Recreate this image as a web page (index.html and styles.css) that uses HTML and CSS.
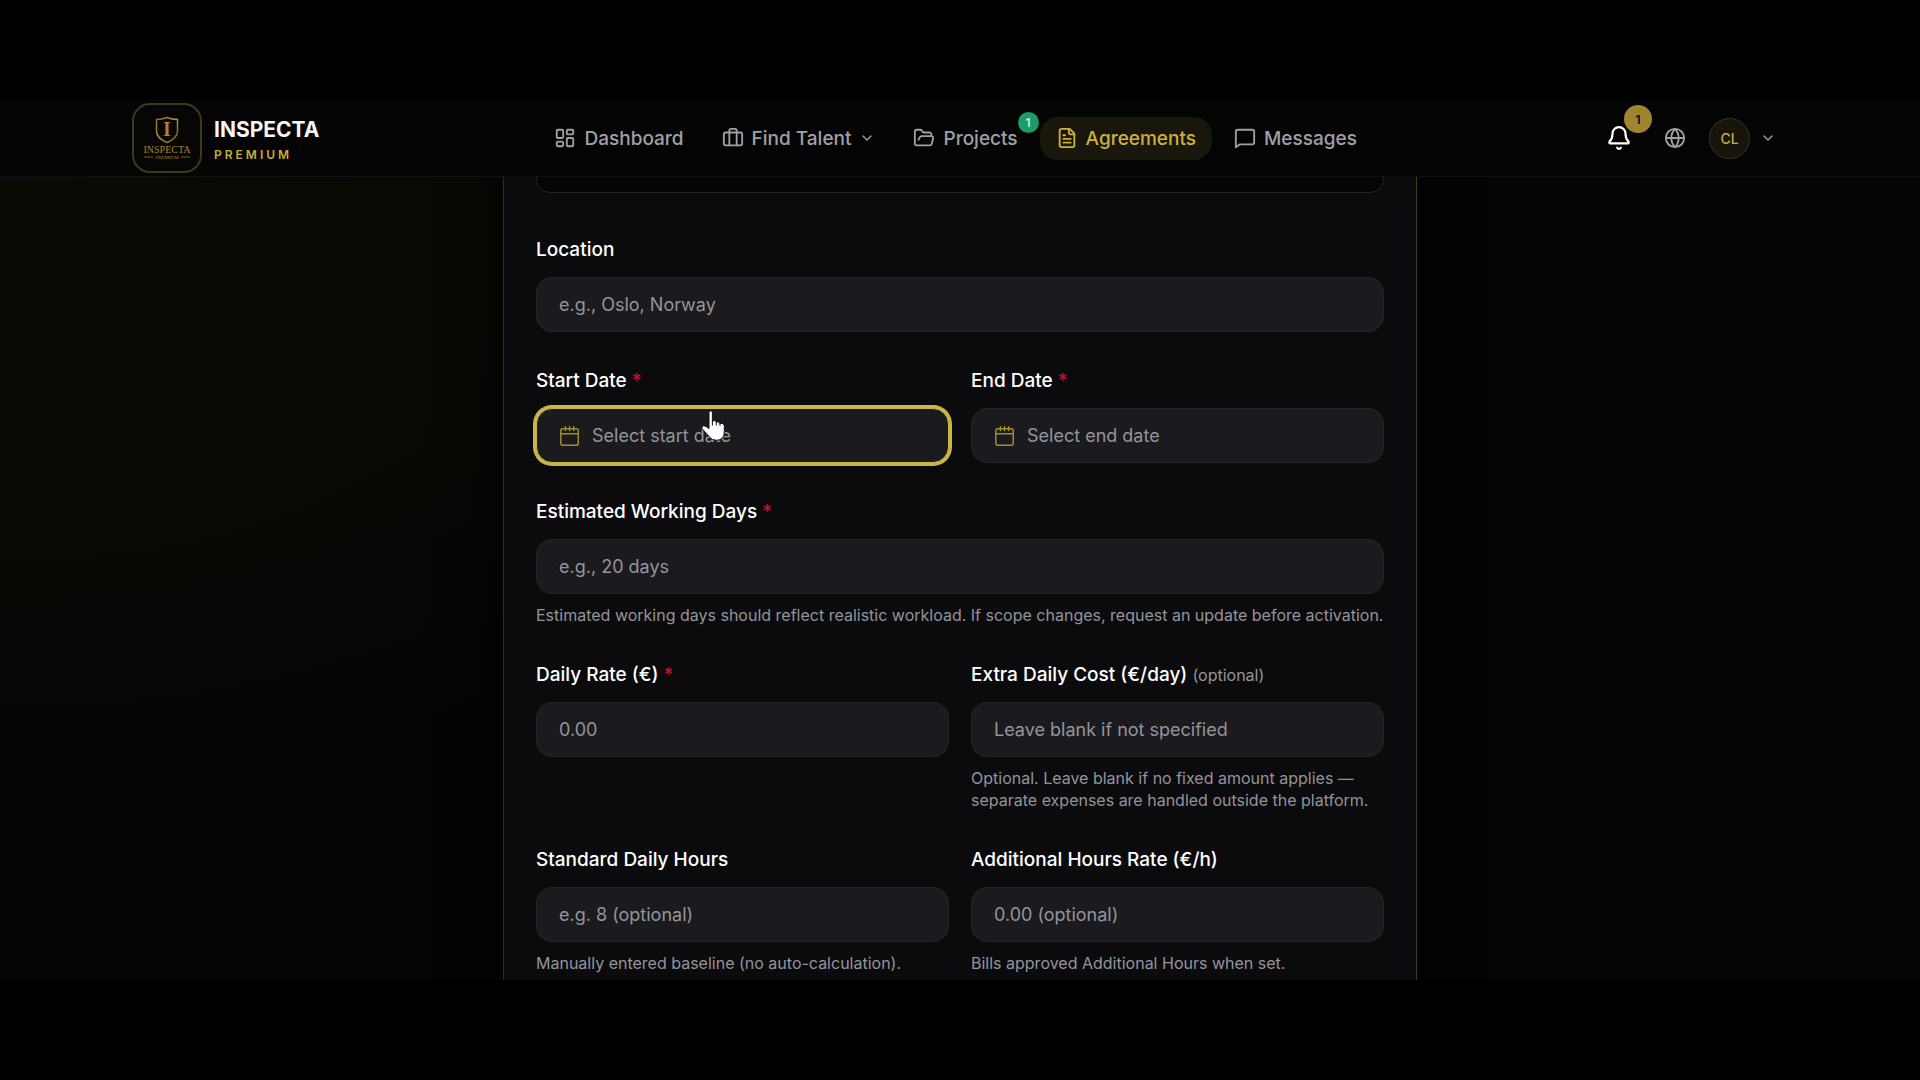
FILE: index.html
```html
<!DOCTYPE html>
<html lang="en">

<head>
    <meta charset="UTF-8">
    <meta name="viewport" content="width=device-width, initial-scale=1.0">
    <title>Inspecta Premium - Agreements</title>
    <link rel="stylesheet" href="styles.css">
</head>

<body>
    <div class="app">
        <header class="header">
            <a href="#" class="brand">
                <span class="brand-logo">
                    <svg viewBox="0 0 66 66" aria-hidden="true">
                        <defs>
                            <linearGradient id="gold" x1="0" y1="0" x2="1" y2="1">
                                <stop offset="0" stop-color="#8a6a28" />
                                <stop offset="0.5" stop-color="#b8933f" />
                                <stop offset="1" stop-color="#6e5420" />
                            </linearGradient>
                        </defs>
                        <path d="M22.500 14.500Q28 14.500 33 12.500Q38 14.500 43.500 14.500V26Q43.500 33 33 37.500Q22.500 33 22.500 26Z" fill="none" stroke="url(#gold)" stroke-width="1.500" />
                        <text x="33" y="31" class="logo-initial">I</text>
                        <text x="33" y="48" class="logo-name">INSPECTA</text>
                        <path d="M10 52H19M47 52H56" stroke="#7a5c24" stroke-width="1" />
                        <text x="33" y="54" class="logo-sub">PREMIUM</text>
                    </svg>
                </span>
                <span class="brand-text">
                    <span class="brand-name">INSPECTA</span>
                    <span class="brand-tier">PREMIUM</span>
                </span>
            </a>

            <nav class="nav">
                <a href="#" class="nav-link">
                    <svg class="icon" viewBox="0 0 24 24"><rect x="3" y="3" width="7" height="9" rx="1" /><rect x="14" y="3" width="7" height="5" rx="1" /><rect x="14" y="12" width="7" height="9" rx="1" /><rect x="3" y="16" width="7" height="5" rx="1" /></svg>
                    Dashboard
                </a>
                <button type="button" class="nav-link">
                    <svg class="icon" viewBox="0 0 24 24"><rect x="2" y="6" width="20" height="14" rx="2" /><path d="M16 20V4a2 2 0 0 0-2-2h-4a2 2 0 0 0-2 2v16" /></svg>
                    Find Talent
                    <svg class="icon chevron" viewBox="0 0 24 24"><path d="m6 9 6 6 6-6" /></svg>
                </button>
                <a href="#" class="nav-link">
                    <svg class="icon" viewBox="0 0 24 24"><path d="m6 14 1.500-2.900A2 2 0 0 1 9.240 10H20a2 2 0 0 1 1.940 2.500l-1.540 6a2 2 0 0 1-1.950 1.500H4a2 2 0 0 1-2-2V5a2 2 0 0 1 2-2h3.900a2 2 0 0 1 1.690.900l.810 1.200a2 2 0 0 0 1.670.900H18a2 2 0 0 1 2 2v2" /></svg>
                    Projects
                    <span class="badge badge-green">1</span>
                </a>
                <a href="#" class="nav-link active">
                    <svg class="icon" viewBox="0 0 24 24"><path d="M15 2H6a2 2 0 0 0-2 2v16a2 2 0 0 0 2 2h12a2 2 0 0 0 2-2V7Z" /><path d="M14 2v4a2 2 0 0 0 2 2h4M10 9H8M16 13H8M16 17H8" /></svg>
                    Agreements
                </a>
                <a href="#" class="nav-link">
                    <svg class="icon" viewBox="0 0 24 24"><path d="M22 17a2 2 0 0 1-2 2H6l-4 3V5a2 2 0 0 1 2-2h16a2 2 0 0 1 2 2z" /></svg>
                    Messages
                </a>
            </nav>

            <div class="actions">
                <button type="button" class="action bell" aria-label="Notifications">
                    <svg class="icon" viewBox="0 0 24 24"><path d="M3.260 15.330A1 1 0 0 0 4 17h16a1 1 0 0 0 .740-1.670C19.410 13.960 18 12.500 18 8A6 6 0 0 0 6 8c0 4.500-1.410 5.960-2.740 7.330" /><path d="M10.300 21a1.940 1.940 0 0 0 3.400 0" /></svg>
                    <span class="badge badge-gold">1</span>
                </button>
                <button type="button" class="action" aria-label="Language">
                    <svg class="icon" viewBox="0 0 24 24"><circle cx="12" cy="12" r="10" /><path d="M12 2a14.500 14.500 0 0 0 0 20 14.500 14.500 0 0 0 0-20M2 12h20" /></svg>
                </button>
                <button type="button" class="account" aria-label="Account">
                    <span class="avatar">CL</span>
                    <svg class="icon chevron" viewBox="0 0 24 24"><path d="m6 9 6 6 6-6" /></svg>
                </button>
            </div>
        </header>

        <main class="main">
            <form class="card">
                <textarea class="description" aria-label="Description"></textarea>

                <div class="field">
                    <label for="location">Location</label>
                    <input type="text" id="location" placeholder="e.g., Oslo, Norway">
                </div>

                <div class="row">
                    <div class="field">
                        <label for="startDate">Start Date <span class="required">*</span></label>
                        <button type="button" id="startDate" class="date-btn focused">
                            <svg class="icon" viewBox="0 0 24 24"><rect x="2" y="4" width="19" height="18" rx="2" /><path d="M7 2v4M11.500 2v4M16 2v4M2 9.500h19" /></svg>
                            Select start date
                            <svg class="pointer" viewBox="0 0 24 31" aria-hidden="true"><path d="M8 2.500Q8 .8 9.700.8T11.400 2.500V11Q14.500 9.600 15.300 12Q18 11 18.800 13.500Q22.500 12.500 23.300 15.500V22Q23.300 30 15.500 30.300Q11 30.300 8.500 27L1 18.500Q.3 16.200 2.700 15.800Q5 15.800 8 18.500Z" /><path class="fold" d="M11.400 10.500V15.500M15.300 11.500V15.500M19 13V16" /></svg>
                        </button>
                    </div>
                    <div class="field">
                        <label for="endDate">End Date <span class="required">*</span></label>
                        <button type="button" id="endDate" class="date-btn">
                            <svg class="icon" viewBox="0 0 24 24"><rect x="2" y="4" width="19" height="18" rx="2" /><path d="M7 2v4M11.500 2v4M16 2v4M2 9.500h19" /></svg>
                            Select end date
                        </button>
                    </div>
                </div>

                <div class="field">
                    <label for="workingDays">Estimated Working Days <span class="required">*</span></label>
                    <input type="text" id="workingDays" placeholder="e.g., 20 days">
                    <p class="hint">Estimated working days should reflect realistic workload. If scope changes, request an update before activation.</p>
                </div>

                <div class="row">
                    <div class="field">
                        <label for="dailyRate">Daily Rate (€) <span class="required">*</span></label>
                        <input type="text" id="dailyRate" placeholder="0.00">
                    </div>
                    <div class="field">
                        <label for="extraCost">Extra Daily Cost (€/day) <span class="optional">(optional)</span></label>
                        <input type="text" id="extraCost" placeholder="Leave blank if not specified">
                        <p class="hint">Optional. Leave blank if no fixed amount applies — separate expenses are handled outside the platform.</p>
                    </div>
                </div>

                <div class="row">
                    <div class="field">
                        <label for="dailyHours">Standard Daily Hours</label>
                        <input type="text" id="dailyHours" placeholder="e.g. 8 (optional)">
                        <p class="hint">Manually entered baseline (no auto-calculation).</p>
                    </div>
                    <div class="field">
                        <label for="hoursRate">Additional Hours Rate (€/h)</label>
                        <input type="text" id="hoursRate" placeholder="0.00 (optional)">
                        <p class="hint">Bills approved Additional Hours when set.</p>
                    </div>
                </div>
            </form>
        </main>
    </div>
</body>

</html>
```

FILE: styles.css
```css
* {
    box-sizing: border-box;
}

body {
    font-family: Inter, sans-serif;
    background: #000;
    color: #fff;
    margin: 0;
    padding: 100px 0;
    height: 100vh;
    overflow: hidden;
}

button,
input,
textarea {
    font-family: inherit;
}

.app {
    display: flex;
    flex-direction: column;
    height: 100%;
    background: #030305;
}

.icon {
    width: 22px;
    height: 22px;
    flex-shrink: 0;
    fill: none;
    stroke: currentColor;
    stroke-width: 2;
    stroke-linecap: round;
    stroke-linejoin: round;
}

.icon.chevron {
    width: 16px;
    height: 16px;
}

/* header */
.header {
    display: flex;
    justify-content: space-between;
    align-items: center;
    height: 77px;
    flex-shrink: 0;
    padding: 0 132px;
    background: #040405;
    border-bottom: 1px solid #111113;
}

.brand {
    display: flex;
    align-items: center;
    gap: 12px;
    text-decoration: none;
}

.brand-logo {
    width: 70px;
    height: 70px;
    border: 2px solid #40381a;
    border-radius: 18px;
    background: #060704;
}

.brand-logo svg {
    display: block;
    width: 100%;
}

.brand-logo text {
    font-family: "Liberation Serif", serif;
    text-anchor: middle;
    fill: #a8832f;
}

.logo-initial {
    font-size: 20px;
    font-weight: bold;
}

.logo-name {
    font-size: 10px;
}

.logo-sub {
    font-size: 5px;
}

.brand-text {
    display: flex;
    flex-direction: column;
    padding-top: 5px;
}

.brand-name {
    color: #f5f5f5;
    font-size: 21px;
    font-weight: 700;
    line-height: 28px;
}

.brand-tier {
    color: #c9ae35;
    font-size: 12px;
    font-weight: 600;
    line-height: 22px;
    letter-spacing: 3px;
}

.nav {
    display: flex;
    gap: 6px;
}

.nav-link {
    display: flex;
    align-items: center;
    gap: 8px;
    height: 43px;
    padding: 0 16px;
    border: none;
    border-radius: 18px;
    background: none;
    color: #a0a0a6;
    font-size: 19px;
    font-weight: 500;
    text-decoration: none;
    position: relative;
}

.nav-link.active {
    background: #19170b;
    color: #cdb13a;
}

.badge {
    position: absolute;
    display: flex;
    align-items: center;
    justify-content: center;
    border-radius: 50%;
    font-weight: 600;
}

.badge-green {
    top: -5px;
    right: -5px;
    width: 21px;
    height: 21px;
    background: #1b9b68;
    color: #d5e8dd;
    font-size: 12px;
}

.badge-gold {
    top: -6px;
    right: -6px;
    width: 28px;
    height: 28px;
    background: #a1842f;
    color: #0b0902;
    font-size: 12px;
}

.actions {
    display: flex;
    align-items: center;
    gap: 5px;
}

.action {
    display: flex;
    align-items: center;
    justify-content: center;
    width: 48px;
    height: 54px;
    border: none;
    background: none;
    color: #a0a0a6;
    position: relative;
}

.bell {
    width: 54px;
    color: #fff;
}

.bell .icon {
    width: 26px;
    height: 26px;
}

.account {
    display: flex;
    align-items: center;
    gap: 10px;
    padding: 0 12px 0 5px;
    border: none;
    background: none;
    color: #a0a0a6;
}

.avatar {
    display: flex;
    align-items: center;
    justify-content: center;
    width: 41px;
    height: 41px;
    border: 1px solid #3a3517;
    border-radius: 50%;
    background: #16140b;
    color: #c9ae3c;
    font-size: 14px;
    font-weight: 500;
}

/* form */
.main {
    flex: 1;
    min-height: 0;
    overflow: hidden;
    padding: 0 24px;
    background: radial-gradient(ellipse 1000px 640px at 0 0, #0b0b04, rgba(9, 9, 4, 0.700) 60%, transparent), #040406;
}

.card {
    display: flex;
    flex-direction: column;
    gap: 34px;
    max-width: 914px;
    margin: -102px auto 0;
    padding: 0 32px 34px;
    background: #0b0b0d;
    border: 1px solid #2b2b2d;
    border-right-color: #463a14;
    box-shadow: 0 0 48px #020203;
}

.description {
    height: 117px;
    margin-bottom: 8px;
    border: 1px solid #262628;
    border-radius: 14px;
    background: #040406;
    color: #fff;
    resize: none;
}

.row {
    display: grid;
    grid-template-columns: 1fr 1fr;
    gap: 22px;
}

.field {
    display: flex;
    flex-direction: column;
}

.field label {
    margin-bottom: 12px;
    font-size: 19px;
    font-weight: 500;
    line-height: 30px;
}

.required {
    color: #c8102e;
}

.optional {
    color: #94949b;
    font-size: 16px;
    font-weight: 400;
}

.field input,
.date-btn {
    width: 100%;
    height: 55px;
    padding: 0 22px;
    border: 1px solid #27272b;
    border-radius: 16px;
    background: #1b1b1f;
    color: #fff;
    font-size: 18px;
}

.field input::placeholder {
    color: #94949b;
}

.date-btn {
    display: flex;
    align-items: center;
    gap: 11px;
    color: #94949b;
    position: relative;
}

.date-btn .icon {
    color: #a58d2c;
    stroke-width: 1.6;
}

.date-btn.focused {
    border-color: #cbb544;
    box-shadow: 0 0 0 3px #cbb544;
}

/* hand cursor over the hovered field */
.pointer {
    position: absolute;
    top: 1px;
    left: 164px;
    width: 24px;
    height: 31px;
    fill: #fff;
    stroke: #111;
    stroke-width: 1;
}

.pointer .fold {
    fill: none;
}

.hint {
    margin: 10px 0 0;
    color: #94949b;
    font-size: 16px;
    line-height: 22px;
}
```
